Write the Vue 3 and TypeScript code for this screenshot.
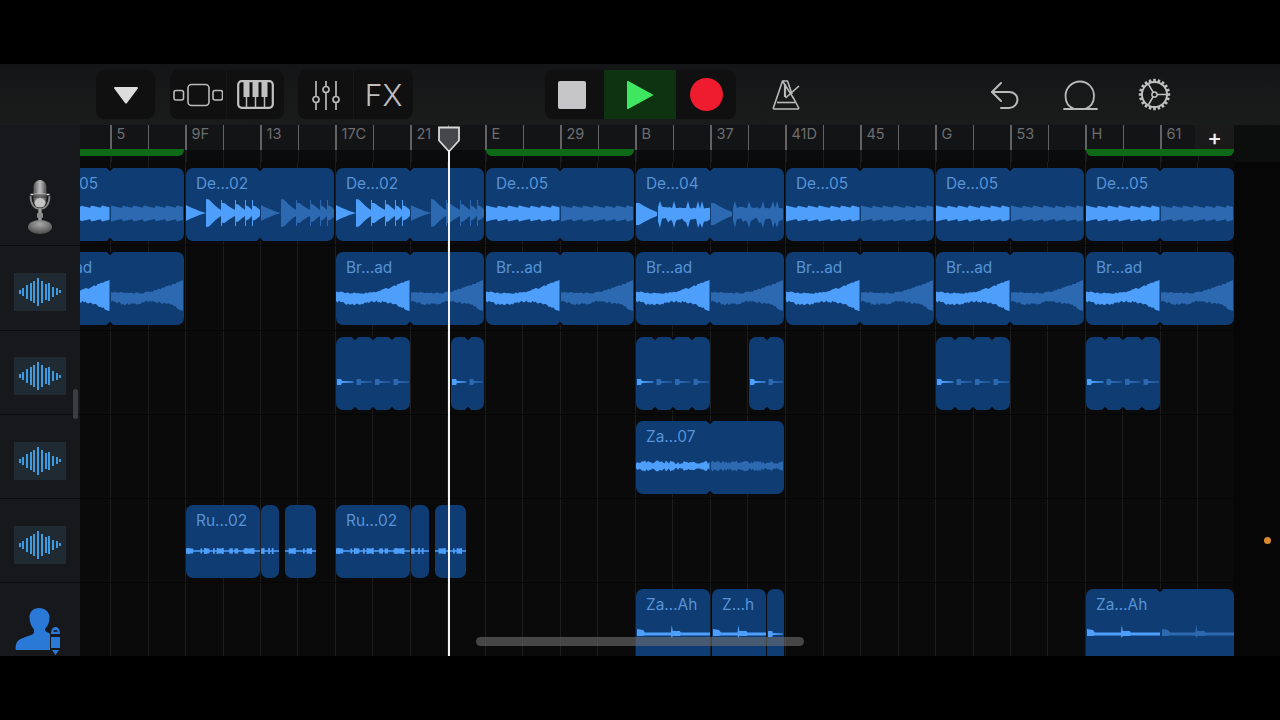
<script setup lang="ts">
type WaveKind = 'vox' | 'pulse' | 'spiky' | 'bread' | 'thin' | 'dense' | 'rumble' | 'ah';

interface Clip {
  x: number;
  w: number;
  kind: WaveKind;
  label?: string;
  segs?: number;
  loop?: boolean;
  seed?: number;
}

const BRIGHT = '#4d9ffb';
const DIM = '#2c69b0';
const LANE_X = 80;

function rng(seed: number) {
  let s = seed;
  return () => {
    s = (s * 9301 + 49297) % 233280;
    return s / 233280;
  };
}

function poly(top: [number, number][], bot: [number, number][]) {
  const pts = [...top, ...bot.slice().reverse()];
  return 'M' + pts.map((p) => `${p[0].toFixed(1)},${p[1].toFixed(1)}`).join('L') + 'Z';
}

function wedge(x0: number, x1: number, cy: number, h: number, tail = 0) {
  const top: [number, number][] = [[x0, cy - h]];
  const bot: [number, number][] = [[x0, cy + h]];
  const n = Math.max(2, Math.floor((x1 - x0) / 3));
  for (let i = 1; i <= n; i++) {
    const t = i / n;
    const a = h * (1 - t) * (1 - t * 0.3) + tail;
    top.push([x0 + (x1 - x0) * t, cy - a]);
    bot.push([x0 + (x1 - x0) * t, cy + a]);
  }
  return poly(top, bot);
}

function wave(kind: WaveKind, off: number, w: number, seed: number): string {
  const r = rng(seed * 131 + 17);
  const top: [number, number][] = [];
  const bot: [number, number][] = [];
  if (kind === 'pulse') {
    const cuts = [0, 20, 35, 49, 59, 66, 74];
    const hs = [8, 14, 10, 9, 8, 8];
    return cuts
      .slice(0, -1)
      .map((c, i) => {
        const x = off + c;
        const spike = i ? `M${x},32L${x + 1},32L${x + 1},58L${x},58Z` : '';
        return wedge(x, off + cuts[i + 1], 45, hs[i], i ? 3 : 0) + spike;
      })
      .join('');
  }
  if (kind === 'thin') {
    const b = Math.min(5, w * 0.3);
    return poly(
      [[off + 1, 42], [off + b, 42], [off + b + 1, 44], [off + w - 1, 44.5]],
      [[off + 1, 48], [off + b, 48], [off + b + 1, 46], [off + w - 1, 45.5]],
    );
  }
  if (kind === 'ah') {
    const cy = 45;
    const a = off + 1;
    const s = off + w * 0.47;
    return poly(
      [[a, cy - 5], [a + 6, cy - 4], [a + 8, cy - 1.5], [s, cy - 1.5], [s + 1, cy - 9], [s + 2, cy - 3], [s + 9, cy - 3], [s + 10, cy - 1.5], [off + w, cy - 1.5]],
      [[a, cy + 2], [a + 6, cy + 2], [a + 8, cy + 1.5], [s, cy + 1.5], [s + 1, cy + 4], [s + 2, cy + 2], [s + 9, cy + 2], [s + 10, cy + 1.5], [off + w, cy + 1.5]],
    );
  }
  if (kind === 'rumble') {
    let x = 0;
    while (x < w) {
      const big = Math.sin(x * 0.42 + seed) > -0.55 && r() > 0.25 && x < w - 4;
      const h = big ? 2.4 + r() * 0.8 : 0.8;
      top.push([off + x, 46 - h], [off + Math.min(w, x + 1.8), 46 - h]);
      bot.push([off + x, 46 + h], [off + Math.min(w, x + 1.8), 46 + h]);
      x += 1.8;
    }
    return poly(top, bot);
  }
  if (kind === 'spiky') {
    const head = wedge(off, off + 21, 46, 11, 2);
    for (let x = 22; x <= w; x += 2) {
      const spike = [24, 38, 52, 62, 66].some((s) => Math.abs(x - s) < 1);
      top.push([off + x, spike ? 33 : 40 - r() * 1.5 + (x - 22) * 0.02]);
      bot.push([off + x, spike ? 60 : 53 + r() * 2 - (x % 16) * 0.25]);
    }
    return head + poly(top, bot);
  }
  for (let x = 0; x <= w; x += 1.5) {
    const t = x / w;
    let a = 0;
    let b = 0;
    if (kind === 'vox') {
      const saw = ((x % 11) / 11) * 2.5;
      a = 37.5 + saw;
      b = 53.5 - saw;
    } else if (kind === 'bread') {
      const g = Math.pow(t, 4);
      a = 38.5 + 2 * Math.sin(t * 5) - 10 * g + r() * 1.8;
      b = 47.5 + 3.5 * Math.sin(t * 6.3 + 0.1) * (t < 0.5 ? 1 : 0.2) + 11 * g + r() * 2.6;
    } else {
      const h = 2.5 + r() * 3.2 - (t > 0.5 ? 0.6 : 0);
      a = 45 - h;
      b = 45 + h;
    }
    top.push([off + x, a]);
    bot.push([off + x, b]);
  }
  return poly(top, bot);
}

function waves(c: Clip) {
  const segs = c.segs ?? 2;
  const sw = c.w / segs;
  const list: { d: string; fill: string }[] = [];
  for (let i = 0; i < segs; i++) {
    const dim = i > 0 && c.loop !== false;
    list.push({
      d: wave(c.kind, i * sw + (dim ? 1 : 0), sw - (dim ? 1 : 0), (c.seed ?? 1) + i),
      fill: dim ? DIM : BRIGHT,
    });
  }
  return list;
}

function notches(c: Clip) {
  const segs = c.segs ?? 2;
  return Array.from({ length: segs - 1 }, (_, i) => ((i + 1) * c.w) / segs);
}

const full = (x: number, label: string, kind: WaveKind, seed = 1): Clip => ({ x, w: 148, label, kind, seed });

const tracks: { icon: 'mic' | 'audio' | 'person'; clips: Clip[] }[] = [
  {
    icon: 'mic',
    clips: [
      full(36, 'De…05', 'vox'),
      full(186, 'De…02', 'pulse'),
      full(336, 'De…02', 'pulse'),
      full(486, 'De…05', 'vox'),
      full(636, 'De…04', 'spiky', 4),
      full(786, 'De…05', 'vox'),
      full(936, 'De…05', 'vox'),
      full(1086, 'De…05', 'vox'),
    ],
  },
  {
    icon: 'audio',
    clips: [
      full(36, 'Br…ad', 'bread', 3),
      full(336, 'Br…ad', 'bread', 3),
      full(486, 'Br…ad', 'bread', 3),
      full(636, 'Br…ad', 'bread', 3),
      full(786, 'Br…ad', 'bread', 3),
      full(936, 'Br…ad', 'bread', 3),
      full(1086, 'Br…ad', 'bread', 3),
    ],
  },
  {
    icon: 'audio',
    clips: [
      { x: 336, w: 74, kind: 'thin', segs: 4 },
      { x: 451, w: 33, kind: 'thin', segs: 2 },
      { x: 636, w: 74, kind: 'thin', segs: 4 },
      { x: 749, w: 35, kind: 'thin', segs: 2 },
      { x: 936, w: 74, kind: 'thin', segs: 4 },
      { x: 1086, w: 74, kind: 'thin', segs: 4 },
    ],
  },
  { icon: 'audio', clips: [full(636, 'Za…07', 'dense', 5)] },
  {
    icon: 'audio',
    clips: [
      { x: 186, w: 74, label: 'Ru…02', kind: 'rumble', segs: 1, seed: 7 },
      { x: 261, w: 18, kind: 'rumble', segs: 1, seed: 9 },
      { x: 285, w: 31, kind: 'rumble', segs: 1, seed: 11 },
      { x: 336, w: 74, label: 'Ru…02', kind: 'rumble', segs: 1, seed: 7 },
      { x: 411, w: 18, kind: 'rumble', segs: 1, seed: 9 },
      { x: 435, w: 31, kind: 'rumble', segs: 1, seed: 11 },
    ],
  },
  {
    icon: 'person',
    clips: [
      { x: 636, w: 74, label: 'Za…Ah', kind: 'ah', segs: 1 },
      { x: 712, w: 54, label: 'Z…h', kind: 'ah', segs: 1 },
      { x: 767, w: 17, kind: 'thin', segs: 1 },
      full(1086, 'Za…Ah', 'ah'),
    ],
  },
];

const tileBars = [4, 8, 14, 18, 22, 28, 22, 16, 18, 10, 7, 3];

const barLabels = ['5', '9F', '13', '17C', '21', 'E', '29', 'B', '37', '41D', '45', 'G', '53', 'H', '61'];
const ticks = Array.from({ length: 30 }, (_, i) => 30 + i * 37.5);
const cycles = [
  { x: 0, w: 104 },
  { x: 406, w: 148 },
  { x: 1006, w: 148 },
];
const gearTeeth = Array.from({ length: 20 }, (_, i) => i * 18);
</script>

<template>
  <div class="screen">
    <header class="toolbar">
      <div class="group drop">
        <svg width="26" height="18" viewBox="0 0 26 18"><path d="M2 1h22a1 1 0 0 1 .8 1.6L14 17a1.3 1.3 0 0 1-2 0L1.200 2.600A1 1 0 0 1 2 1z" fill="#dcdcdc" /></svg>
      </div>
      <div class="group views">
        <button class="cell first">
          <svg width="50" height="24" viewBox="0 0 50 24" fill="none" stroke="#b9b9b9" stroke-width="1.6">
            <rect x="1" y="7.500" width="9.500" height="9.500" rx="2" />
            <rect x="15" y="1.500" width="21" height="21" rx="3.500" />
            <rect x="40" y="7.500" width="9.500" height="9.500" rx="2" />
          </svg>
        </button>
        <button class="cell">
          <svg width="37" height="29" viewBox="0 0 37 29" fill="none">
            <rect x="1.200" y="1.200" width="34.600" height="26.600" rx="3.500" stroke="#c2c2c2" stroke-width="2.200" />
            <path d="M9.500 2v25M18.500 17v10M27.500 2v25" stroke="#b9b9b9" stroke-width="1.500" />
            <path d="M6.500 2h6v15h-6zM15.500 2h6v15h-6zM24.500 2h6v15h-6z" fill="#c2c2c2" />
          </svg>
        </button>
      </div>
      <div class="group mix">
        <button class="cell first mixer">
          <svg width="30" height="30" viewBox="0 0 30 30" fill="none" stroke="#b9b9b9" stroke-width="1.700">
            <path d="M5 1v15M5 23v7M15 1v5M15 13v17M25 1v15M25 23v7" />
            <circle cx="5" cy="19.500" r="3" />
            <circle cx="15" cy="9.500" r="3" />
            <circle cx="25" cy="19.500" r="3" />
          </svg>
        </button>
        <button class="cell fx">FX</button>
      </div>
      <div class="group transport">
        <button class="cell stop"><span class="stop-box"></span></button>
        <button class="cell play">
          <svg width="28" height="30" viewBox="0 0 28 30"><path d="M1 1.800v26.400a.8.800 0 0 0 1.200.7L26.800 15.600a.7.700 0 0 0 0-1.200L2.200 1.100A.8.800 0 0 0 1 1.800z" fill="#3fe65f" /></svg>
        </button>
        <button class="cell rec"><span class="rec-dot"></span></button>
      </div>
      <svg class="tool metronome" width="30" height="31" viewBox="0 0 30 31" fill="none" stroke="#b9b9b9" stroke-width="1.600" stroke-linejoin="round">
        <path d="M11.500 2h5l4.500 13M23 20l4.500 8.500a1 1 0 0 1-.9 1.500H3.400a1 1 0 0 1-.9-1.500L11.500 2z" />
        <path d="M14 5v13" stroke-width="2.200" />
        <path d="M14.500 19L28 7" />
        <path d="M6 23.500h18" />
      </svg>
      <svg class="tool undo" width="30" height="28" viewBox="0 0 30 28" fill="none" stroke="#b9b9b9" stroke-width="2" stroke-linecap="round" stroke-linejoin="round">
        <path d="M11 2L2 11l9 9" />
        <path d="M2 11h17c5 0 8.500 3.200 8.500 7.500S24 27 19 27h-8" />
      </svg>
      <svg class="tool loop" width="35" height="30" viewBox="0 0 35 30" fill="none" stroke="#b9b9b9" stroke-width="1.800" stroke-linecap="round">
        <path d="M1 29h10.500C5.500 27 2.500 22 2.500 16c0-8 6.500-14.500 14.500-14.500S31 8 31 16c0 6-3 11-9 13h12" />
        <path d="M11.500 29H22" />
      </svg>
      <svg class="tool gear" width="33" height="33" viewBox="0 0 33 33" fill="none" stroke="#c0c0c0">
        <circle cx="16.500" cy="16.500" r="12.500" stroke-width="1.900" />
        <g stroke-width="2.600">
          <path v-for="a in gearTeeth" :key="a" d="M16.500 .8v3.200" :transform="`rotate(${a} 16.500 16.500)`" />
        </g>
        <circle cx="16.500" cy="16.500" r="2.600" stroke-width="1.500" />
        <path d="M19 16.500h10M15.200 14.300L10 5.500M15.200 18.700L10 27.500" stroke-width="1.600" />
      </svg>
    </header>

    <main class="main">
      <div class="ruler-row">
        <div class="ruler-side"></div>
        <div class="ruler">
          <template v-for="(t, i) in ticks" :key="t">
            <span class="tick" :style="{ left: t + 'px' }"></span>
            <span v-if="i % 2 === 0 && barLabels[i / 2]" class="bar-label" :style="{ left: t + 6.5 + 'px' }">{{ barLabels[i / 2] }}</span>
          </template>
          <span v-for="c in cycles" :key="c.x" class="cycle" :class="{ cut: c.x === 0 }" :style="{ left: c.x + 'px', width: c.w + 'px' }"></span>
          <button class="add">+</button>
        </div>
        <div class="ruler-end"></div>
      </div>

      <div class="tracks">
        <div v-for="(track, ti) in tracks" :key="ti" class="track">
          <div class="head">
            <svg v-if="track.icon === 'mic'" class="mic" width="30" height="56" viewBox="0 0 30 56">
              <defs>
                <linearGradient id="micBody" x1="0" y1="0" x2="1" y2="0">
                  <stop offset="0" stop-color="#555" />
                  <stop offset=".5" stop-color="#bdbdbd" />
                  <stop offset="1" stop-color="#4c4c4c" />
                </linearGradient>
                <radialGradient id="micBase" cx=".5" cy=".3" r=".7">
                  <stop offset="0" stop-color="#a8a8a8" />
                  <stop offset="1" stop-color="#4a4a4a" />
                </radialGradient>
              </defs>
              <rect x="8.500" y="1" width="13" height="27" rx="6.500" fill="url(#micBody)" />
              <path d="M5.500 15.500h19" stroke="#ddd" stroke-width="1.500" />
              <rect x="8" y="15" width="14" height="4" fill="#3a3a3a" opacity=".6" />
              <path d="M5.500 17c0 8 4 13 9.500 13s9.500-5 9.500-13" fill="none" stroke="#888" stroke-width="1.800" />
              <ellipse cx="15" cy="24" rx="5.500" ry="4.500" fill="#c4c4c4" />
              <rect x="13" y="30" width="4" height="14" fill="url(#micBody)" />
              <rect x="12" y="34" width="6" height="5" rx="1" fill="#8b8b8b" />
              <ellipse cx="15" cy="48" rx="12" ry="7" fill="url(#micBase)" />
            </svg>
            <div v-else-if="track.icon === 'audio'" class="tile">
              <span v-for="(h, i) in tileBars" :key="i" class="tile-bar" :style="{ height: h + 'px' }"></span>
            </div>
            <svg v-else class="person" width="48" height="48" viewBox="0 0 48 48">
              <path d="M24 1c-6 0-9.500 4-9.500 9 0 5 1.500 9 4.500 12.500v3.500c-3 3.500-14 4-17 9-.8 1.500-1.500 4-1.500 6.500 0 1 .5 1.500 1.500 1.500h33V26.500c-2-1-5-2-5-3.500v-1c3-3 4.500-7 4.500-12 0-5-4.500-9-10.500-9z" fill="#2a79d6" />
              <path d="M36 27c0-5 2-7 4.500-7s4.500 2 4.500 7z M36 30h9v11h-9z M37 43h7l-3.500 5z" fill="#2a79d6" />
              <path d="M38.500 24h4" stroke="#111" stroke-width="1.500" />
            </svg>
          </div>
          <div class="lane">
            <div
              v-for="c in track.clips"
              :key="c.x"
              class="clip"
              :style="{ left: c.x - LANE_X + 'px', width: c.w + 'px' }"
            >
              <span v-if="c.label" class="clip-label">{{ c.label }}</span>
              <svg class="wave" :width="c.w" height="73">
                <path v-for="(p, i) in waves(c)" :key="i" :d="p.d" :fill="p.fill" />
              </svg>
              <template v-for="n in notches(c)" :key="n">
                <i class="notch top" :style="{ left: n + 'px' }"></i>
                <i class="notch bottom" :style="{ left: n + 'px' }"></i>
              </template>
            </div>
          </div>
          <div class="lane-end"></div>
        </div>
      </div>

      <div class="playhead">
        <svg width="24" height="27" viewBox="0 0 24 27"><path d="M2 1.500h20v13L12 25.500 2 14.500z" fill="#46474a" stroke="#d9d9d9" stroke-width="1.800" /></svg>
        <span class="playhead-line"></span>
      </div>
      <span class="scroll-h"></span>
      <span class="scroll-v"></span>
      <span class="dot"></span>
    </main>
  </div>
</template>

<style>
html,
body {
  margin: 0;
  background: #000;
}
</style>

<style scoped>
.screen {
  width: 1280px;
  height: 720px;
  padding: 64px 0;
  box-sizing: border-box;
  display: flex;
  flex-direction: column;
  background: #000;
  font-family: Inter, 'Liberation Sans', sans-serif;
  overflow: hidden;
}

.toolbar {
  height: 61px;
  flex: none;
  box-sizing: border-box;
  padding: 6px 0 6px 96px;
  display: flex;
  align-items: center;
  background: linear-gradient(#141516, #1a1c1c);
}

.group {
  height: 49px;
  display: flex;
  align-items: center;
  background: #101011;
  border-radius: 8px;
  overflow: hidden;
}

.drop {
  width: 59px;
  justify-content: center;
}

.views {
  width: 114px;
  margin-left: 15px;
}

.mix {
  width: 115px;
  margin-left: 14px;
}

.transport {
  width: 191px;
  margin-left: 132px;
}

.cell {
  flex: 1;
  height: 100%;
  padding: 0;
  border: 0;
  background: none;
  display: flex;
  align-items: center;
  justify-content: center;
}

.cell.first {
  border-right: 1px solid #171718;
}

.views .first {
  flex: 0 0 57px;
}

.mix .first {
  flex: 0 0 56px;
}

.fx {
  font-family: Inter, sans-serif;
  font-size: 30px;
  font-weight: 300;
  color: #c0c0c0;
}

.stop {
  flex: 0 0 59px;
  padding-right: 5px;
  box-sizing: border-box;
}

.stop-box {
  width: 28px;
  height: 28px;
  border-radius: 2px;
  background: #c6c5c8;
}

.play {
  flex: 0 0 72px;
  background: #0d3311;
}

.rec-dot {
  width: 33px;
  height: 33px;
  border-radius: 50%;
  background: #ee1c2e;
}

.tool {
  flex: none;
}

.metronome {
  margin-left: 35px;
}

.undo {
  margin-left: 189px;
}

.loop {
  margin-left: 43px;
}

.gear {
  margin-left: 40px;
}

.main {
  position: relative;
  flex: 1;
  min-height: 0;
  overflow: hidden;
}

.ruler-row {
  height: 37px;
  display: flex;
}

.ruler-side {
  width: 80px;
  background: #17181b;
}

.ruler {
  position: relative;
  width: 1154px;
  overflow: hidden;
  background: linear-gradient(#131416 25px, #0a0b0c 25px);
}

.ruler-end {
  flex: 1;
  background: #0c0d0d;
}

.tick {
  position: absolute;
  top: 0;
  width: 1.500px;
  height: 25px;
  background: #636365;
  box-shadow: 0 12px 0 #1c1c1d;
}

.bar-label {
  position: absolute;
  top: 0;
  font-size: 14.500px;
  line-height: 17px;
  color: #6d6d70;
}

.cycle {
  position: absolute;
  top: 24px;
  height: 7px;
  background: #0f6a18;
  border-radius: 0 0 6px 6px;
}

.cycle.cut {
  border-radius: 0 0 6px 0;
}

.add {
  position: absolute;
  right: 0;
  top: 0;
  width: 39px;
  height: 24px;
  padding: 0;
  border: 0;
  background: #1a1a1b;
  color: #f0f0f0;
  font-family: Inter, sans-serif;
  font-size: 22px;
  font-weight: 500;
  line-height: 24px;
}

.tracks {
  height: 507px;
  overflow: hidden;
}

.track {
  height: 84.300px;
  display: flex;
}

.head {
  width: 80px;
  height: 100%;
  flex: none;
  box-sizing: border-box;
  padding-top: 8px;
  display: flex;
  align-items: center;
  justify-content: center;
  background: #17181b;
  border-bottom: 1px solid #0c0c0d;
}

.mic {
  margin-bottom: 2px;
}

.tile {
  width: 52px;
  height: 38px;
  display: flex;
  align-items: center;
  justify-content: center;
  gap: 1.700px;
  background: #1f2a33;
}

.tile-bar {
  width: 2px;
  background: #3f9be0;
}

.person {
  margin: 4px 2px 0 0;
}

.lane {
  position: relative;
  width: 1154px;
  height: 100%;
  overflow: hidden;
  box-sizing: border-box;
  background-color: #0a0a0b;
  background-image: repeating-linear-gradient(
    90deg,
    transparent 0,
    transparent 30px,
    #1d1d1f 30px,
    #1d1d1f 31px,
    transparent 31px,
    transparent 37.500px
  );
  border-bottom: 1px solid #050505;
}

.lane-end {
  flex: 1;
  background: #060606;
}

.clip {
  position: absolute;
  top: 6px;
  height: 73px;
  border-radius: 7px;
  overflow: hidden;
  background: #0e3c73;
}

.clip-label {
  position: absolute;
  left: 10px;
  top: 7px;
  font-size: 15.400px;
  line-height: 18px;
  color: #5893d6;
  white-space: nowrap;
}

.wave {
  display: block;
}

.notch {
  position: absolute;
  width: 6px;
  height: 6px;
  margin-left: -3px;
  background: #08080a;
  transform: rotate(45deg);
}

.notch.top {
  top: -4px;
}

.notch.bottom {
  bottom: -4px;
}

.playhead {
  position: absolute;
  left: 437px;
  top: 1px;
  width: 24px;
  height: 530px;
}

.playhead svg {
  display: block;
}

.playhead-line {
  position: absolute;
  left: 11px;
  top: 24px;
  bottom: 0;
  width: 2px;
  background: #f4f4f4;
}

.scroll-h {
  position: absolute;
  left: 476px;
  top: 512px;
  width: 328px;
  height: 9px;
  border-radius: 5px;
  background: rgba(110, 110, 112, 0.6);
}

.scroll-v {
  position: absolute;
  left: 73px;
  top: 264px;
  width: 5px;
  height: 30px;
  border-radius: 3px;
  background: #3c3d40;
}

.dot {
  position: absolute;
  left: 1264px;
  top: 412px;
  width: 7px;
  height: 7px;
  border-radius: 50%;
  background: #d98a2b;
}
</style>
